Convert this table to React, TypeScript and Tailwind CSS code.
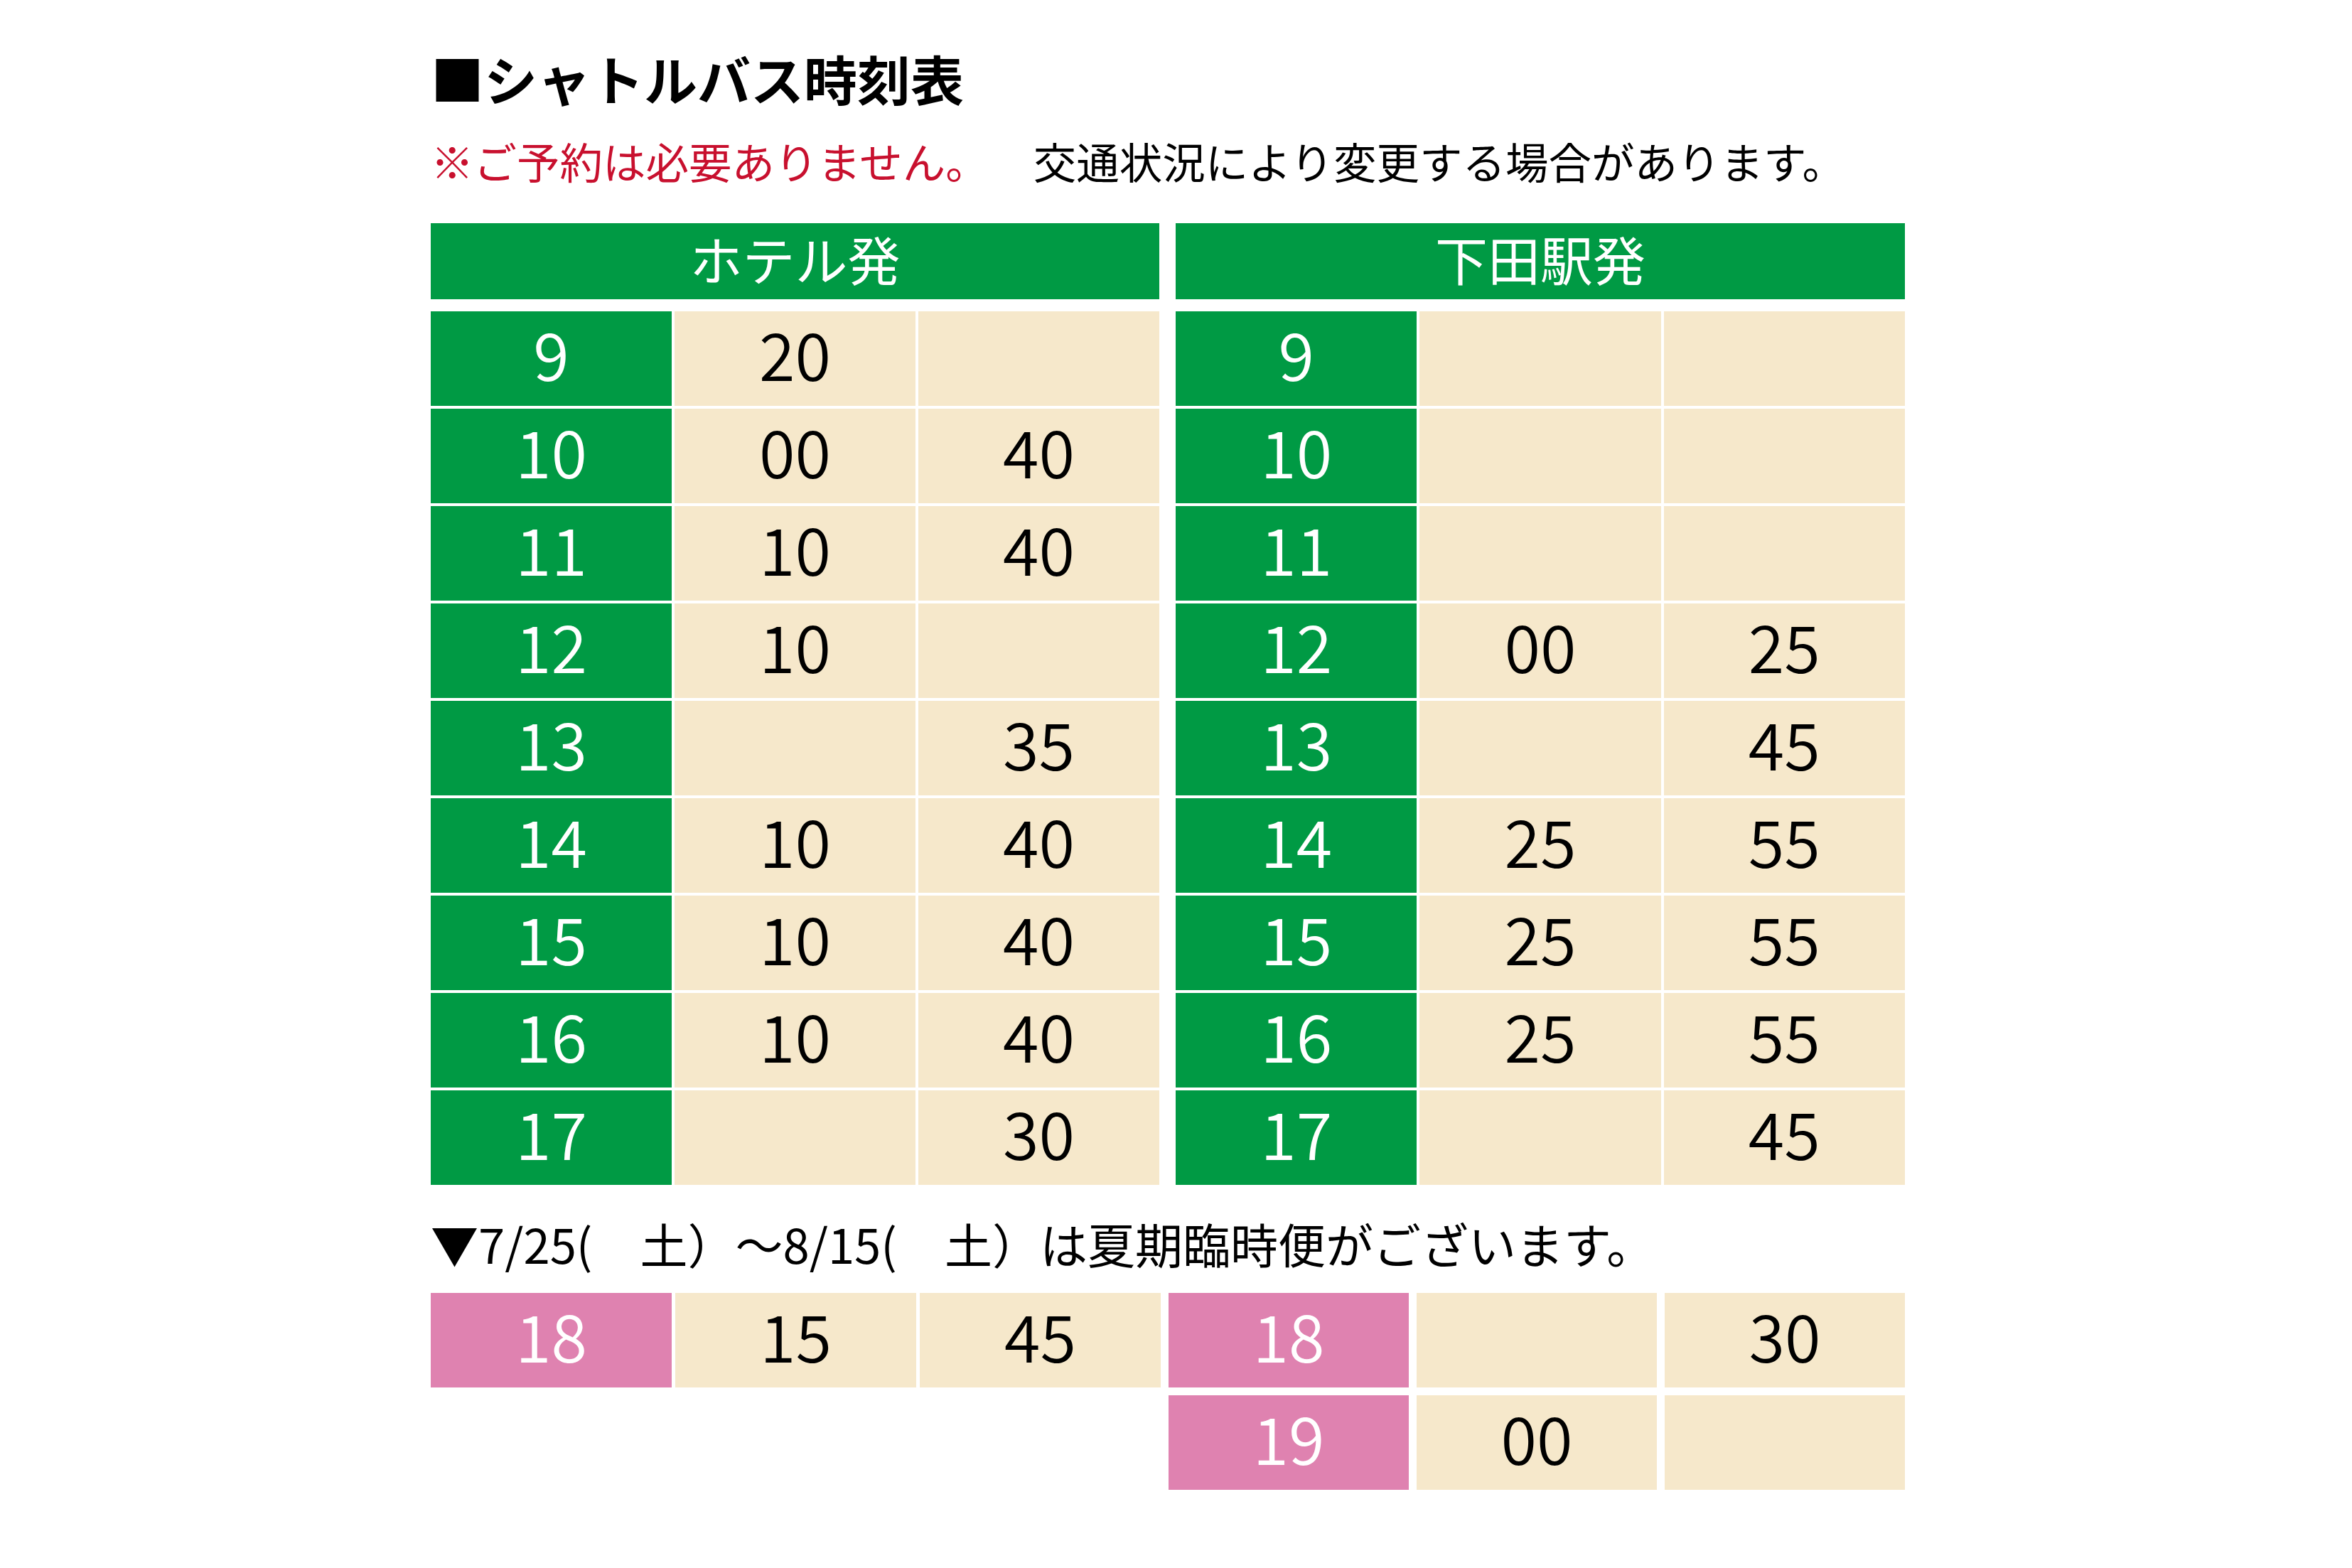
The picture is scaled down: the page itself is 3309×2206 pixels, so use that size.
import React from 'react'

const hotel: [string, string, string][] = [
  ['9', '20', ''],
  ['10', '00', '40'],
  ['11', '10', '40'],
  ['12', '10', ''],
  ['13', '', '35'],
  ['14', '10', '40'],
  ['15', '10', '40'],
  ['16', '10', '40'],
  ['17', '', '30'],
]

const shimoda: [string, string, string][] = [
  ['9', '', ''],
  ['10', '', ''],
  ['11', '', ''],
  ['12', '00', '25'],
  ['13', '', '45'],
  ['14', '25', '55'],
  ['15', '25', '55'],
  ['16', '25', '55'],
  ['17', '', '45'],
]

function Cell({ text, hour, pink }: { text: string; hour?: boolean; pink?: boolean }) {
  const bg = pink ? 'bg-[#df82b0] text-white' : hour ? 'bg-[#009a44] text-white' : 'bg-[#f6e8cb] text-black'
  return (
    <div className={`h-[133px] pb-[16px] flex items-center justify-center text-[92px] font-[350] leading-none ${bg}`}>
      {text}
    </div>
  )
}

function Timetable({ title, rows, width }: { title: string; rows: [string, string, string][]; width: string }) {
  return (
    <div className={width}>
      <div className="h-[107px] pb-[8px] bg-[#009a44] text-white text-[74px] leading-none flex items-center justify-center">
        {title}
      </div>
      <div className="mt-[17px] grid grid-cols-3 gap-[4px]">
        {rows.map(([h, a, b]) => (
          <React.Fragment key={h}>
            <Cell text={h} hour />
            <Cell text={a} />
            <Cell text={b} />
          </React.Fragment>
        ))}
      </div>
    </div>
  )
}

export default function App() {
  return (
    <div className="w-[3309px] h-[2206px] bg-white text-black font-['Noto_Sans_CJK_JP','Noto_Sans',sans-serif] overflow-hidden">
      <div className="ml-[606px] w-[2074px] pt-[72px]">
        <h1 className="text-[75px] font-bold leading-none">■シャトルバス時刻表</h1>

        <div className="mt-[49px] flex text-[60.5px] leading-none">
          <span className="text-[#c8102e]">※ご予約は必要ありません。</span>
          <span className="ml-[63px]">交通状況により変更する場合があります。</span>
        </div>

        <div className="mt-[57px] flex gap-[23px]">
          <Timetable title="ホテル発" rows={hotel} width="w-[1025px]" />
          <Timetable title="下田駅発" rows={shimoda} width="w-[1026px]" />
        </div>

        <p className="mt-[48px] text-[67px] leading-none">▼7/25(　土）～8/15(　土）は夏期臨時便がございます。</p>

        <div className="mt-[37px] flex items-start gap-[11px]">
          <div className="w-[1027px] grid grid-cols-3 gap-[5px]">
            <Cell text="18" pink />
            <Cell text="15" />
            <Cell text="45" />
          </div>
          <div className="w-[1036px] grid grid-cols-3 gap-[11px]">
            <Cell text="18" pink />
            <Cell text="" />
            <Cell text="30" />
            <Cell text="19" pink />
            <Cell text="00" />
            <Cell text="" />
          </div>
        </div>
      </div>
    </div>
  )
}
